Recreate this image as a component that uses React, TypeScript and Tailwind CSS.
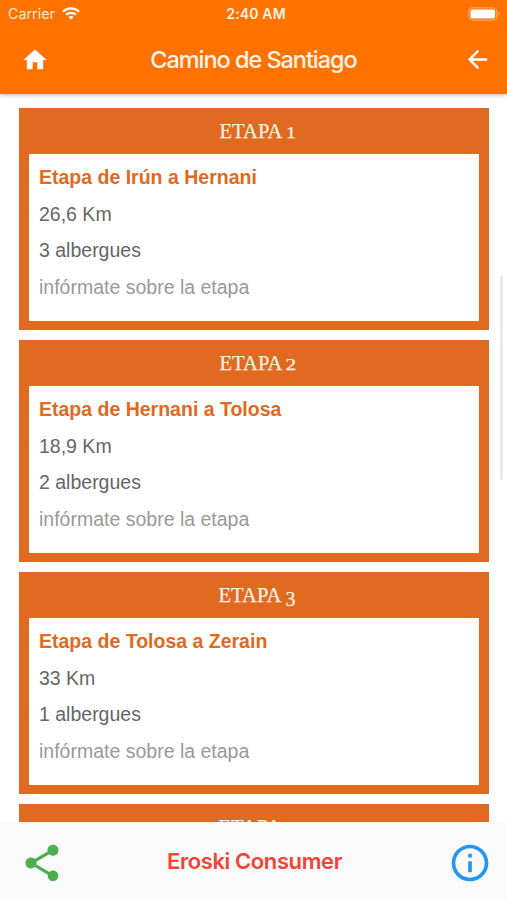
import { MdArrowBack, MdHome, MdInfoOutline, MdShare } from "react-icons/md";

interface Stage {
  id: number;
  title: string;
  distance: string;
  hostels: string;
}

const stages: Stage[] = [
  { id: 1, title: "Etapa de Irún a Hernani", distance: "26,6 Km", hostels: "3 albergues" },
  { id: 2, title: "Etapa de Hernani a Tolosa", distance: "18,9 Km", hostels: "2 albergues" },
  { id: 3, title: "Etapa de Tolosa a Zerain", distance: "33 Km", hostels: "1 albergues" },
];

// Old-style figures: 1 and 2 sit at x-height, 3 hangs below the baseline
const figureStyle: Record<number, string> = {
  1: "inline-block text-[16px] scale-x-125",
  2: "inline-block text-[16px] scale-x-135",
  3: "relative top-[4px] text-[20px]",
};

export default function App() {
  return (
    <div className="relative flex h-[900px] w-[507px] flex-col overflow-hidden bg-white font-['Inter','Liberation_Sans',sans-serif]">
      <Header />
      <main className="flex min-h-0 flex-1 flex-col gap-[10px] overflow-hidden pt-[14px] pr-[18px] pl-[19px]">
        {stages.map((stage) => (
          <StageCard key={stage.id} stage={stage} />
        ))}
        {/* Next card, only its heading peeks out above the footer */}
        <section className="h-[222px] shrink-0 border border-[#dc6a25] bg-[#e06a20] px-[9px]">
          <h2 className="h-[45px] pl-[6px] text-center font-['Liberation_Serif',serif] text-[20.5px] leading-[45px] tracking-[0.1px] text-[#fff0e3] [-webkit-text-stroke:0.25px_#fff0e3]">
            ETAPA <span className="relative top-[4px] text-[20px]">4</span>
          </h2>
        </section>
      </main>
      <Footer />
      {/* Scroll indicator */}
      <div className="absolute top-[275px] right-[4px] h-[205px] w-[3px] rounded-full bg-[#ebebeb]" />
    </div>
  );
}

function Header() {
  return (
    <header className="z-10 h-[94px] shrink-0 bg-[#ff7200] text-white shadow-[0_1px_4px_rgba(0,0,0,0.3)]">
      <div className="grid h-[27px] grid-cols-[1fr_auto_1fr] items-center pr-[7px] pl-[8px]">
        <div className="flex items-center gap-[7px] text-[14.3px] text-[#ffe5cf]">
          <span>Carrier</span>
          <WifiIcon />
        </div>
        <span className="pl-[4px] text-center text-[14px] font-semibold tracking-[0.15px] whitespace-nowrap text-[#fff0e2]">
          2:40 AM
        </span>
        <div className="flex justify-end">
          <BatteryIcon />
        </div>
      </div>
      <div className="grid h-[66px] grid-cols-[1fr_auto_1fr] items-center pr-[15px] pl-[21px]">
        <MdHome className="size-[28px]" />
        <h1 className="pr-[6px] text-[23.5px] font-medium tracking-[-1.05px] text-[#fff4e9]">Camino de Santiago</h1>
        <MdArrowBack className="size-[29px] -translate-y-px justify-self-end" />
      </div>
    </header>
  );
}

function StageCard({ stage }: { stage: Stage }) {
  return (
    <section className="flex h-[222px] shrink-0 flex-col border border-[#dc6a25] bg-[#e06a20] px-[9px] pb-[8px]">
      <h2 className="h-[45px] pl-[6px] text-center font-['Liberation_Serif',serif] text-[20.5px] leading-[45px] tracking-[0.1px] text-[#fff0e3] [-webkit-text-stroke:0.25px_#fff0e3]">
        ETAPA <span className={figureStyle[stage.id]}>{stage.id}</span>
      </h2>
      <div className="flex-1 bg-white px-[10px] pt-[5px] font-['Liberation_Sans',sans-serif] text-[19.5px] leading-[36.7px] text-[#666666]">
        <h3 className="font-bold text-[#e06a20]">{stage.title}</h3>
        <p>{stage.distance}</p>
        <p>{stage.hostels}</p>
        <p className="text-[#999999]">infórmate sobre la etapa</p>
      </div>
    </section>
  );
}

function Footer() {
  return (
    <footer className="z-10 grid h-[78px] shrink-0 grid-cols-[1fr_auto_1fr] items-center bg-[#fafafa] pt-[4px] pr-[15px] pl-[20px]">
      <MdShare className="size-[44px] text-[#4caf50]" />
      <span className="pr-[3px] pb-[3px] text-[22px] font-semibold tracking-[-0.4px] text-[#f44336]">Eroski Consumer</span>
      <MdInfoOutline className="size-[44px] justify-self-end text-[#2196f3]" />
    </footer>
  );
}

function WifiIcon() {
  return (
    <svg width="18" height="13" viewBox="0 0 18 13" fill="none" stroke="#fff" strokeWidth="2.2">
      <path d="M1 4.8C5.5 .3 12.5 .3 17 4.8" />
      <path d="M4 7.8c2.8-2.7 7.2-2.7 10 0" />
      <path d="M6.5 10 9 12.6 11.5 10C10.2 8.7 7.8 8.7 6.5 10Z" fill="#fff" stroke="none" />
    </svg>
  );
}

function BatteryIcon() {
  return (
    <svg width="32" height="14" viewBox="0 0 32 14" fill="none">
      <rect x=".8" y=".8" width="28" height="12.4" rx="3.5" stroke="#ffb273" strokeWidth="1" />
      <rect x="2.5" y="2.5" width="24.6" height="9" rx="1.8" fill="#fff" />
      <path d="M30.2 4.8c1.5.8 1.5 3.6 0 4.4Z" fill="#ffb273" />
    </svg>
  );
}
